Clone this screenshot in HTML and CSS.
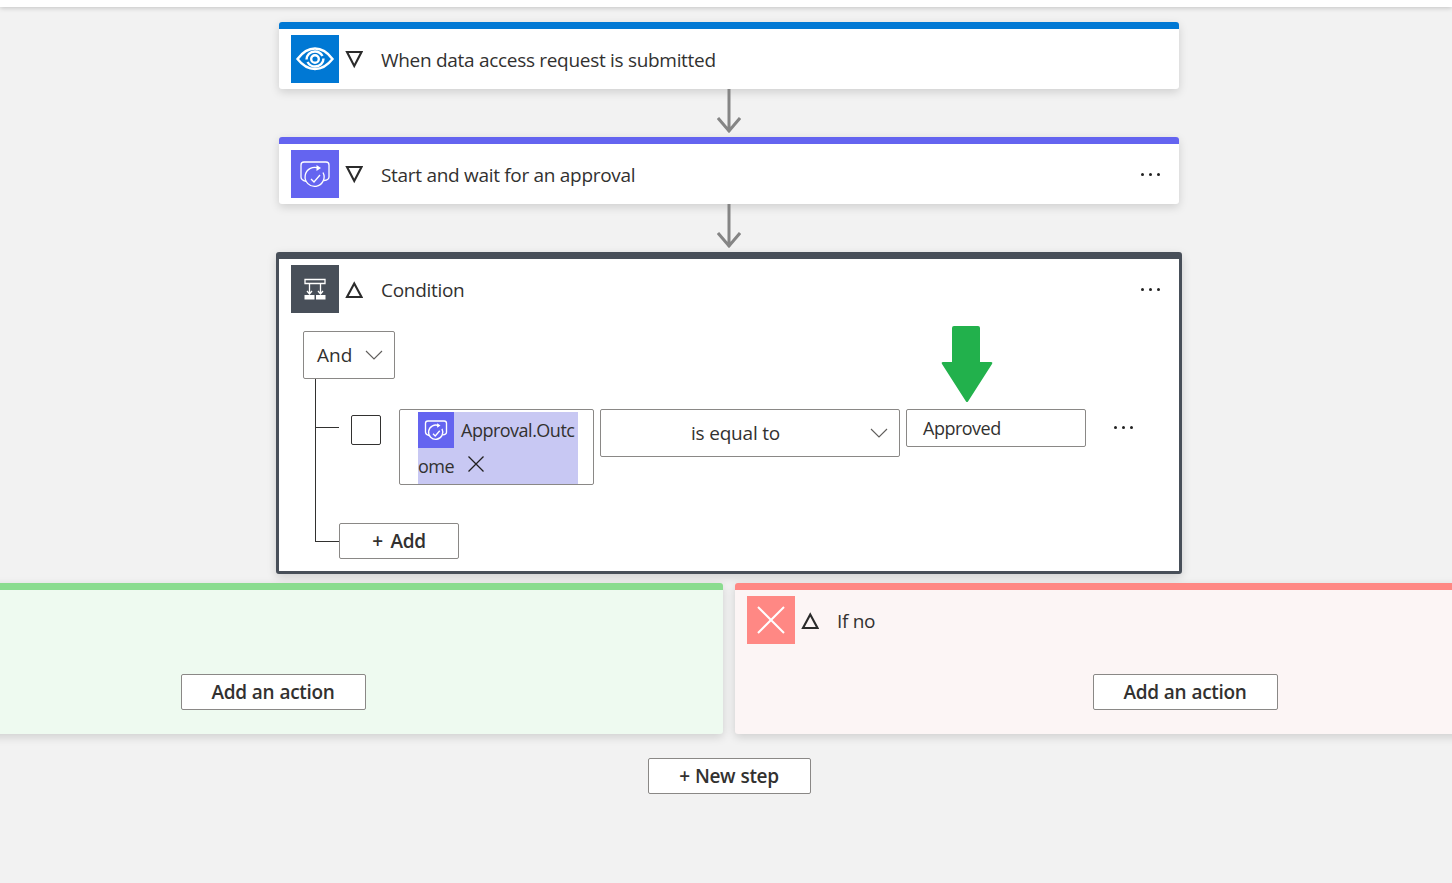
FILE: index.html
```html
<!DOCTYPE html>
<html lang="en">
<head>
  <meta charset="UTF-8" />
  <title>Flow designer</title>
  <link rel="stylesheet" href="styles.css">
</head>
<body>
  <div class="topbar"></div>

  <div class="canvas">
    <div class="card card-blue">
      <div class="card-head">
        <span class="icon bg-blue">
          <svg width="48" height="48" viewBox="0 0 48 48" fill="none" stroke="#fff">
            <path d="M6.5 24C12 16.5 18 13.5 24 13.5S36 16.5 41.5 24C36 31 30 34 24 34S12 31 6.5 24Z" stroke-width="2.4"/>
            <path d="M15.5 24.5C15.5 20 19 16.5 24 16.5C27.5 16.5 30 18.5 31.5 21" stroke-width="2.4"/>
            <path d="M32.5 23.5C32.5 28 29 31.5 24 31.5C20.5 31.5 18 29.5 16.5 27" stroke-width="2.4"/>
            <circle cx="24" cy="24" r="3.8" stroke-width="2.4"/>
          </svg>
        </span>
        <svg class="tri" width="18" height="20" viewBox="0 0 18 20"><path d="M2 3H16.5L9.25 17Z"/></svg>
        <span class="title">When data access request is submitted</span>
      </div>
    </div>

    <svg class="arrow" width="24" height="48" viewBox="0 0 24 48"><path d="M12 0V43M1 29L12 42L23 29"/></svg>

    <div class="card card-purple">
      <div class="card-head">
        <span class="icon bg-purple">
          <svg width="48" height="48" viewBox="0 0 48 48" fill="none" stroke="#fff" stroke-width="1.3">
            <path d="M15 31.5Q10 30 10 27V15Q10 12 13 12H35Q38 12 38 15V27Q38 30 33 30.5"/>
            <path d="M28 18.5A9.5 9.5 0 1 0 32 22.5"/>
            <path d="M20 29L23 32L29 25"/>
            <path d="M25.5 15L30 18L25.5 21Z" fill="#fff" stroke="none"/>
          </svg>
        </span>
        <svg class="tri" width="18" height="20" viewBox="0 0 18 20"><path d="M2 3H16.5L9.25 17Z"/></svg>
        <span class="title">Start and wait for an approval</span>
        <span class="dots head-dots"><i></i><i></i><i></i></span>
      </div>
    </div>

    <svg class="arrow" width="24" height="48" viewBox="0 0 24 48"><path d="M12 0V43M1 29L12 42L23 29"/></svg>

    <div class="card card-condition">
      <div class="card-head">
        <span class="icon bg-dark">
          <svg width="48" height="48" viewBox="0 0 48 48" fill="none" stroke="#fff" stroke-width="1.3">
            <path d="M14 14.5H34V18.5H14Z"/>
            <path d="M18.5 18.5V29M29.5 18.5V29M16 26L18.5 29L21 26M27 26L29.5 29L32 26"/>
            <path d="M13.5 30H23.5V34.5H13.5ZM25 30H34.5V34.5H25Z" fill="#fff" stroke="none"/>
          </svg>
        </span>
        <svg class="tri" width="18" height="20" viewBox="0 0 18 20"><path d="M9.25 4.5L16.5 18H2Z"/></svg>
        <span class="title">Condition</span>
        <span class="dots head-dots"><i></i><i></i><i></i></span>
      </div>

      <div class="cond-body">
        <div class="and-select">
          <span>And</span>
          <svg class="chev" width="18" height="10" viewBox="0 0 18 10"><path d="M1 1L9 9L17 1"/></svg>
        </div>

        <div class="tree">
          <div class="rule">
            <span class="branch-line"></span>
            <span class="check"></span>
            <div class="token-box">
              <div class="token">
                <span class="token-icon">
                  <svg width="36" height="36" viewBox="0 0 48 48" fill="none" stroke="#fff" stroke-width="1.8">
                    <path d="M15 31.5Q10 30 10 27V15Q10 12 13 12H35Q38 12 38 15V27Q38 30 33 30.5"/>
                    <path d="M28 18.5A9.5 9.5 0 1 0 32 22.5"/>
                    <path d="M20 29L23 32L29 25"/>
                    <path d="M25.5 15L30 18L25.5 21Z" fill="#fff" stroke="none"/>
                  </svg>
                </span>Approval.Outcome<svg class="token-x" width="18" height="18" viewBox="0 0 18 18"><path d="M1.5 1.5L16.5 16.5M16.5 1.5L1.5 16.5"/></svg>
              </div>
            </div>
            <div class="op-select">
              <span>is equal to</span>
              <svg class="chev" width="18" height="10" viewBox="0 0 18 10"><path d="M1 1L9 9L17 1"/></svg>
            </div>
            <div class="value-wrap">
              <svg class="green-arrow" width="52" height="77" viewBox="0 0 52 77"><path d="M11 2Q11 0 13 0H37Q39 0 39 2V36H50Q52 36 51 38L27 75.5Q26 76.5 25 75.5L1 38Q0 36 2 36H11Z"/></svg>
              <div class="value">Approved</div>
            </div>
            <span class="dots rule-dots"><i></i><i></i><i></i></span>
          </div>

          <div class="add-row">
            <span class="branch-line"></span>
            <button class="btn btn-add">+ Add</button>
          </div>
        </div>
      </div>
    </div>

    <div class="branches">
      <div class="branch branch-yes">
        <div class="branch-foot"><button class="btn btn-action">Add an action</button></div>
      </div>
      <div class="branch branch-no">
        <div class="card-head">
          <span class="icon bg-red">
            <svg width="48" height="48" viewBox="0 0 48 48" fill="none" stroke="#fff" stroke-width="2"><path d="M11 11L37 37M37 11L11 37"/></svg>
          </span>
          <svg class="tri" width="18" height="20" viewBox="0 0 18 20"><path d="M9.25 4.5L16.5 18H2Z"/></svg>
          <span class="title">If no</span>
        </div>
        <div class="branch-foot"><button class="btn btn-action">Add an action</button></div>
      </div>
    </div>

    <button class="btn btn-new">+ New step</button>
  </div>
</body>
</html>
```

FILE: styles.css
```css
html, body {
  height: 100%;
}
body {
  margin: 0;
  background: #f2f2f2;
  font-family: "Open Sans", "Noto Sans", sans-serif;
  color: #323130;
  overflow: hidden;
}
.topbar {
  height: 7px;
  background: #fff;
  box-shadow: 0 1px 5px rgba(0,0,0,0.2);
}
.canvas {
  width: 1458px;
  padding-top: 15px;
  display: flex;
  flex-direction: column;
  align-items: center;
}
.card {
  width: 900px;
  box-sizing: border-box;
  background: #fff;
  border-radius: 3px;
  box-shadow: 0 3px 10px rgba(0,0,0,0.15);
  flex-shrink: 0;
}
.card-blue { border-top: 7px solid #0078d4; }
.card-purple { border-top: 7px solid #6464f0; }
.card-condition {
  width: 906px;
  border: 3px solid #484f59;
  border-top-width: 7px;
  padding-bottom: 12px;
}
.card-head {
  display: flex;
  align-items: center;
  padding: 6px 12px;
  height: 48px;
}
.icon {
  width: 48px;
  height: 48px;
  flex-shrink: 0;
  display: flex;
}
.bg-blue { background: #0078d4; }
.bg-purple { background: #6464f0; }
.bg-dark { background: #484f59; }
.bg-red { background: #ff8884; }
.tri {
  margin-left: 6px;
  flex-shrink: 0;
}
.tri path {
  fill: none;
  stroke: #2b2b2b;
  stroke-width: 2.1;
}
.title {
  margin-left: 18px;
  padding-top: 2px;
  font-size: 19px;
  line-height: 26px;
  letter-spacing: -0.3px;
}
.dots {
  display: flex;
  gap: 5px;
}
.dots i {
  width: 3px;
  height: 3px;
  border-radius: 50%;
  background: #222;
}
.head-dots {
  margin-left: auto;
  margin-right: 7px;
}
.arrow {
  flex-shrink: 0;
}
.arrow path {
  fill: none;
  stroke: #858585;
  stroke-width: 3;
}

.cond-body {
  padding: 12px 0 0 24px;
}
.and-select {
  width: 92px;
  height: 48px;
  box-sizing: border-box;
  border: 1px solid #8a8886;
  border-radius: 2px;
  display: flex;
  align-items: center;
  justify-content: space-between;
  padding: 0 11px 0 13px;
  font-size: 19px;
}
.chev path {
  fill: none;
  stroke: #605e5c;
  stroke-width: 1.1;
}
.tree {
  position: relative;
  margin-left: 12px;
  padding-top: 30px;
}
.tree::before {
  content: "";
  position: absolute;
  left: 0;
  top: 0;
  bottom: 18px;
  width: 1px;
  background: #323130;
}
.branch-line {
  width: 24px;
  height: 1px;
  background: #323130;
  flex-shrink: 0;
}
.rule {
  display: flex;
  align-items: flex-start;
}
.rule > .branch-line {
  margin-top: 18px;
}
.check {
  width: 30px;
  height: 30px;
  box-sizing: border-box;
  margin: 6px 0 0 12px;
  border: 1px solid #323130;
  border-radius: 2px;
  flex-shrink: 0;
}
.token-box {
  width: 195px;
  height: 76px;
  box-sizing: border-box;
  margin-left: 18px;
  padding: 2px 0 0 18px;
  border: 1px solid #8a8886;
  border-radius: 2px;
  background: #fff;
}
.token {
  width: 160px;
  height: 72px;
  background: #c8c8f3;
  font-size: 18px;
  line-height: 36px;
  word-break: break-all;
  letter-spacing: -0.5px;
}
.token-icon {
  display: inline-flex;
  width: 36px;
  height: 36px;
  margin-right: 7px;
  background: #6464f0;
  vertical-align: top;
}
.token-x {
  margin-left: 13px;
  vertical-align: 0;
}
.token-x path {
  stroke: #201f1e;
  stroke-width: 1.3;
  fill: none;
}
.op-select {
  width: 300px;
  height: 48px;
  box-sizing: border-box;
  margin-left: 6px;
  border: 1px solid #8a8886;
  border-radius: 2px;
  display: flex;
  align-items: center;
  padding: 0 11px 0 90px;
  font-size: 19px;
  letter-spacing: -0.2px;
  justify-content: space-between;
}
.value-wrap {
  position: relative;
  margin-left: 6px;
}
.value {
  width: 180px;
  height: 38px;
  box-sizing: border-box;
  border: 1px solid #8a8886;
  border-radius: 2px;
  padding-left: 16px;
  font-size: 18px;
  line-height: 36px;
  letter-spacing: -0.5px;
}
.green-arrow {
  position: absolute;
  left: 35px;
  top: -83px;
}
.green-arrow path {
  fill: #22b14c;
}
.rule-dots {
  margin: 17px 0 0 28px;
}
.add-row {
  display: flex;
  align-items: center;
  margin-top: 38px;
}
.btn {
  font-family: inherit;
  background: #fff;
  border: 1px solid #8a8886;
  border-radius: 2px;
  color: #323130;
  font-weight: 600;
  padding: 0;
  flex-shrink: 0;
  font-size: 19px;
  letter-spacing: -0.3px;
  word-spacing: 0.5px;
}
.btn-add {
  width: 120px;
  height: 36px;
  word-spacing: 3px;
}
.btn-action {
  width: 185px;
  height: 36px;
}
.btn-new {
  width: 163px;
  height: 36px;
  margin-top: 24px;
}

.branches {
  display: flex;
  gap: 12px;
  margin-top: 9px;
  flex-shrink: 0;
}
.branch {
  width: 900px;
  height: 151px;
  box-sizing: border-box;
  border-radius: 3px;
  box-shadow: 0 3px 10px rgba(0,0,0,0.15);
  display: flex;
  flex-direction: column;
}
.branch-yes {
  background: #eefaf0;
  border-top: 7px solid #8adc8f;
}
.branch-no {
  background: #fcf5f5;
  border-top: 7px solid #ff8884;
}
.branch-foot {
  margin-top: auto;
  padding-bottom: 24px;
  display: flex;
  justify-content: center;
}
```
